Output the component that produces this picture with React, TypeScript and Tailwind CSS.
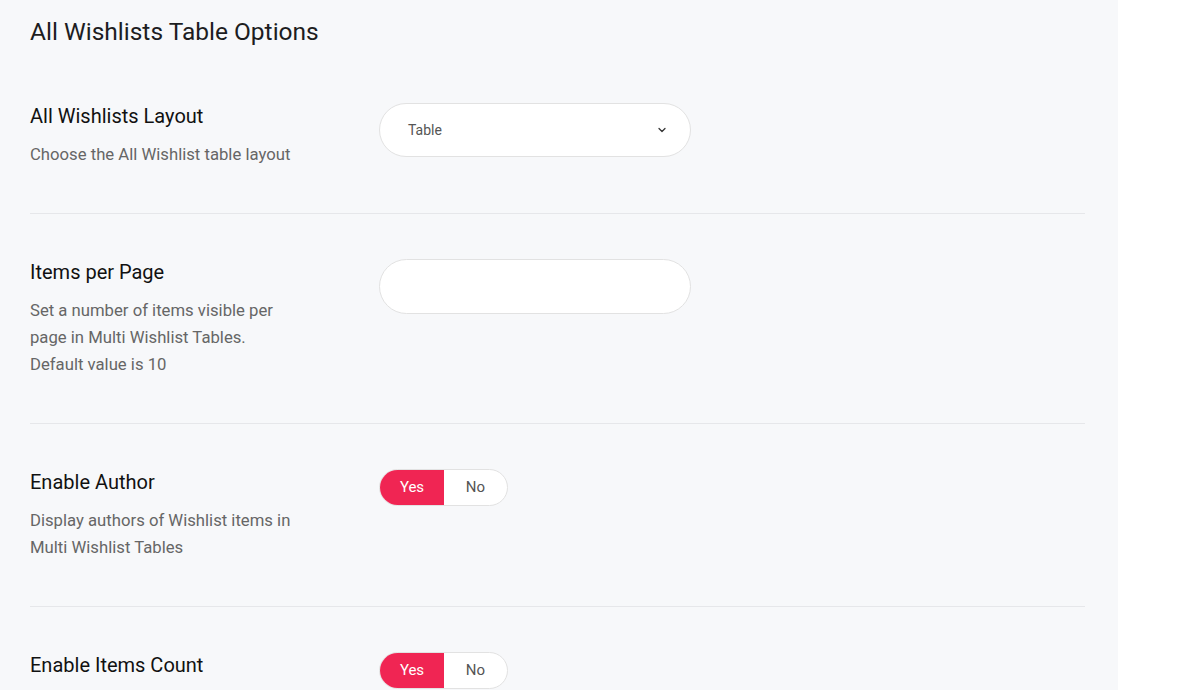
import React, { useState } from 'react';
import { ChevronDown } from 'lucide-react';

type Row = {
  label: string;
  desc?: string;
  control: 'select' | 'input' | 'toggle';
};

const ROWS: Row[] = [
  { label: 'All Wishlists Layout', desc: 'Choose the All Wishlist table layout', control: 'select' },
  { label: 'Items per Page', desc: 'Set a number of items visible per page in Multi Wishlist Tables. Default value is 10', control: 'input' },
  { label: 'Enable Author', desc: 'Display authors of Wishlist items in Multi Wishlist Tables', control: 'toggle' },
  { label: 'Enable Items Count', control: 'toggle' },
];

function Toggle() {
  const [on, setOn] = useState(true);
  return (
    <div className="flex h-[37px] w-[129px] overflow-hidden rounded-full border border-[#e2e2e2] bg-white text-[15px]">
      <button
        onClick={() => setOn(true)}
        className={`w-[64px] ${on ? 'bg-[#f02553] text-white' : 'text-[#555]'}`}
      >
        Yes
      </button>
      <button
        onClick={() => setOn(false)}
        className={`flex-1 ${!on ? 'bg-[#f02553] text-white' : 'text-[#555]'}`}
      >
        No
      </button>
    </div>
  );
}

export default function App() {
  return (
    <div className="h-[690px] overflow-hidden bg-white font-['Roboto',sans-serif]">
      <div className="min-h-[690px] w-[1118px] bg-[#f7f8fa] pl-[30px] pr-[33px]">
        <h1 className="pt-[16px] text-[24.5px] leading-[32px] text-[#1d1d1f]">All Wishlists Table Options</h1>
        <div className="mt-[10px]">
          {ROWS.map((row) => (
            <div key={row.label} className="flex border-b border-[#e6e7ea] py-[45px]">
              <div className="w-[349px] shrink-0">
                <div className="text-[20px] leading-[26px] text-[#111]">{row.label}</div>
                {row.desc && (
                  <p className="mt-[12px] max-w-[266px] text-[16.7px] leading-[27px] text-[#666]">{row.desc}</p>
                )}
              </div>
              <div>
                {row.control === 'select' && (
                  <div className="flex h-[54px] w-[312px] items-center justify-between rounded-full border border-[#e2e2e2] bg-white pl-[28px] pr-[22px] text-[14px] text-[#555]">
                    <span>Table</span>
                    <ChevronDown size={12} strokeWidth={2.5} className="text-[#333]" />
                  </div>
                )}
                {row.control === 'input' && (
                  <input
                    type="text"
                    className="h-[55px] w-[312px] rounded-full border border-[#e2e2e2] bg-white px-[28px] text-[14px] outline-none"
                  />
                )}
                {row.control === 'toggle' && <Toggle />}
              </div>
            </div>
          ))}
        </div>
      </div>
    </div>
  );
}
